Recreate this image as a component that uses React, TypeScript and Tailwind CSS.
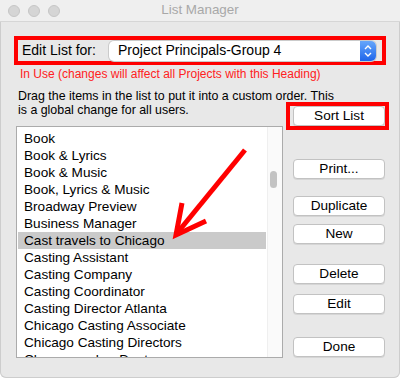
const items = [
  "Book",
  "Book & Lyrics",
  "Book & Music",
  "Book, Lyrics & Music",
  "Broadway Preview",
  "Business Manager",
  "Cast travels to Chicago",
  "Casting Assistant",
  "Casting Company",
  "Casting Coordinator",
  "Casting Director Atlanta",
  "Chicago Casting Associate",
  "Chicago Casting Directors",
  "Choreographer Dept",
];

const selected = "Cast travels to Chicago";

function MacButton({ label, className = "" }: { label: string; className?: string }) {
  return (
    <button
      className={`flex h-[20px] w-[92px] items-center justify-center rounded-[4px] border border-[#c2c2c2] bg-white text-[13.6px] leading-none text-black shadow-[0_1px_0_rgba(0,0,0,0.08)] ${className}`}
    >
      {label}
    </button>
  );
}

export default function App() {
  return (
    <div className="relative h-[378px] w-[400px] overflow-hidden rounded-b-[6px] bg-[#e8e8e8] font-['Liberation_Sans',Arial,sans-serif] text-[13px] text-black shadow-[inset_0_0_0_1px_#cdcdcd]">
      {/* title bar */}
      <div className="grid h-[22px] grid-cols-[1fr_auto_1fr] items-center border-b border-[#d6d6d6] bg-[#efefef]">
        <div className="flex gap-[8px] pl-[8px]">
          <span className="size-[12px] rounded-full border border-[#c6c6c6] bg-[#d5d5d5]" />
          <span className="size-[12px] rounded-full border border-[#c6c6c6] bg-[#d5d5d5]" />
          <span className="size-[12px] rounded-full border border-[#c6c6c6] bg-[#d5d5d5]" />
        </div>
        <div className="text-[13.4px] text-[#a8a8a8]">List Manager</div>
        <div />
      </div>

      {/* heading picker */}
      <div className="mx-[14px] mt-[14px] flex h-[29px] items-center border-4 border-[#ff0000] pl-[4px] pr-[6px] text-[14px]">
        <span className="w-[87px]">Edit List for:</span>
        <div className="flex h-[20px] flex-1 items-center rounded-[5px] bg-white shadow-[0_0_0_1px_#cbcbcb,0_1px_1px_rgba(0,0,0,0.12)]">
          <span className="flex-1 pl-[9px]">Project Principals-Group 4</span>
          <span className="flex h-full w-[16px] items-center justify-center rounded-r-[5px] bg-gradient-to-b from-[#66a6fb] to-[#1e64ea]">
            <svg width="10" height="14" viewBox="0 0 10 14" fill="none" stroke="white" strokeWidth="1.4">
              <path d="M2 5 L5 2 L8 5" />
              <path d="M2 9 L5 12 L8 9" />
            </svg>
          </span>
        </div>
      </div>

      <p className="ml-[20px] mt-[2px] h-[14px] text-[12px] leading-[14px] text-[#ff2121]">
        In Use (changes will affect all Projects with this Heading)
      </p>

      <div className="mt-[8px] flex">
        {/* list column */}
        <div className="ml-[16px] w-[267px]">
          <p className="ml-[2px] w-[330px] text-[12.4px] leading-[14px]">
            Drag the items in the list to put it into a custom order. This
            <br />
            is a global change for all users.
          </p>
          <div className="mt-[9px] flex h-[232px] border border-[#ababab] bg-white">
            <div className="flex-1 overflow-hidden px-[1px] pt-[3px] text-[13.6px]">
              {items.map((item) => (
                <div
                  key={item}
                  className={`h-[17px] whitespace-nowrap pl-[6px] leading-[17px] ${item === selected ? "bg-[#cacaca]" : ""}`}
                >
                  {item}
                </div>
              ))}
            </div>
            <div className="w-[15px] border-l border-[#efefef] bg-[#fafafa]">
              <div className="ml-[2px] mt-[44px] h-[17px] w-[7px] rounded-full bg-[#c3c3c3]" />
            </div>
          </div>
        </div>

        {/* buttons column */}
        <div className="ml-[3px] flex w-[103px] flex-col">
          <div className="mt-[13px] flex h-[28px] items-center border-4 border-[#ff0000] pl-[3px]">
            <MacButton label="Sort List" />
          </div>
          <MacButton label="Print..." className="ml-[7px] mt-[29px]" />
          <MacButton label="Duplicate" className="ml-[7px] mt-[17px]" />
          <MacButton label="New" className="ml-[7px] mt-[8px]" />
          <MacButton label="Delete" className="ml-[7px] mt-[20px]" />
          <MacButton label="Edit" className="ml-[7px] mt-[10px]" />
          <MacButton label="Done" className="ml-[7px] mt-[23px]" />
        </div>
      </div>

      {/* annotation arrow */}
      <svg className="pointer-events-none absolute inset-0" width="400" height="378" viewBox="0 0 400 378" fill="none" stroke="#ff0000" strokeWidth="5">
        <path d="M245 150 L178 232" />
        <path d="M182 203 L176 235 L206 221" strokeLinejoin="miter" />
      </svg>
    </div>
  );
}
